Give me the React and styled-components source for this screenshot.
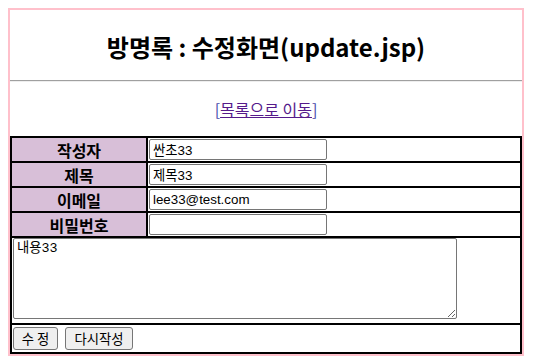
import React from "react";
import styled, { createGlobalStyle } from "styled-components";

const Global = createGlobalStyle`
  html, body { margin: 0; padding: 0; background: #fff; }
  body { margin: 8px; font-family: "Noto Sans CJK KR", "Noto Sans", sans-serif; color: #000; }
`;

const Frame = styled.div`
  width: 512px;
  border: 2px solid #ffc0cb;
`;

const Title = styled.h2`
  margin: 0;
  padding: 22px 0 18px;
  line-height: 30px;
  font-size: 24px;
  font-weight: 700;
  text-align: center;
  font-family: "Noto Sans CJK KR", sans-serif;
`;

const Rule = styled.hr`
  margin: 0;
  height: 0;
  border: 0;
  border-top: 1px solid #a0a0a0;
  border-bottom: 1px solid #eeeeee;
`;

const LinkLine = styled.p`
  margin: 0;
  padding: 17px 0 17px;
  line-height: 20px;
  font-size: 16px;
  text-align: center;
  color: #4848a8;
`;

const Link = styled.a`
  color: #551a8b;
  text-decoration: underline;
`;

const Table = styled.table`
  width: 100%;
  border-collapse: collapse;
  border: 2px solid #000;
`;

const Row = styled.tr`
  height: ${(p) => p.$h}px;
`;

const Label = styled.td`
  width: 134px;
  background: #d8bfd8;
  border: 2px solid #000;
  padding: 0;
  text-align: center;
  font-weight: 700;
  font-size: 16px;
  line-height: 20px;
`;

const Cell = styled.td`
  border: 2px solid #000;
  padding: ${(p) => p.$pad || "1px 0 1px 1px"};
  vertical-align: middle;
`;

const TextInput = styled.input`
  box-sizing: border-box;
  display: block;
  width: 178px;
  height: 21px;
  margin: 0;
  padding: 1px 3px;
  border: 1px solid #767676;
  border-radius: 2px;
  font-family: "Liberation Sans", "Noto Sans CJK KR", sans-serif;
  font-size: 13.333px;
  color: #000;
  background: #fff;
`;

const Area = styled.textarea`
  box-sizing: border-box;
  display: block;
  width: 444px;
  height: 81px;
  margin: 0;
  padding: 2px 3px;
  border: 1px solid #767676;
  border-radius: 2px;
  font-family: "Liberation Mono", "Noto Sans CJK KR", monospace;
  font-size: 13.333px;
  line-height: 16px;
  color: #000;
`;

const Buttons = styled.div`
  display: flex;
  gap: 7px;
  padding: 1px 0;
`;

const Button = styled.button`
  box-sizing: border-box;
  height: 23px;
  width: ${(p) => p.$w}px;
  margin: 0;
  padding: 0 6px;
  border: 1px solid #767676;
  border-radius: 3px;
  background: #efefef;
  font-family: "Noto Sans CJK KR", sans-serif;
  font-size: 13.333px;
  line-height: 20px;
  color: #000;
`;

export default function App() {
  return (
    <>
      <Global />
      <Frame>
        <Title>방명록 : 수정화면(update.jsp)</Title>
        <Rule />
        <LinkLine>
          [<Link href="#">목록으로 이동</Link>]
        </LinkLine>
        <Table>
          <tbody>
            <Row $h={23}>
              <Label>작성자</Label>
              <Cell><TextInput defaultValue="싼초33" /></Cell>
            </Row>
            <Row $h={24}>
              <Label>제목</Label>
              <Cell><TextInput defaultValue="제목33" /></Cell>
            </Row>
            <Row $h={25}>
              <Label>이메일</Label>
              <Cell><TextInput defaultValue="lee33@test.com" /></Cell>
            </Row>
            <Row $h={25}>
              <Label>비밀번호</Label>
              <Cell><TextInput type="password" defaultValue="" /></Cell>
            </Row>
            <tr>
              <Cell colSpan={2} $pad="0 0 4px 1px">
                <Area defaultValue="내용33" />
              </Cell>
            </tr>
            <tr>
              <Cell colSpan={2}>
                <Buttons>
                  <Button $w={45}>수 정</Button>
                  <Button $w={68}>다시작성</Button>
                </Buttons>
              </Cell>
            </tr>
          </tbody>
        </Table>
      </Frame>
    </>
  );
}
